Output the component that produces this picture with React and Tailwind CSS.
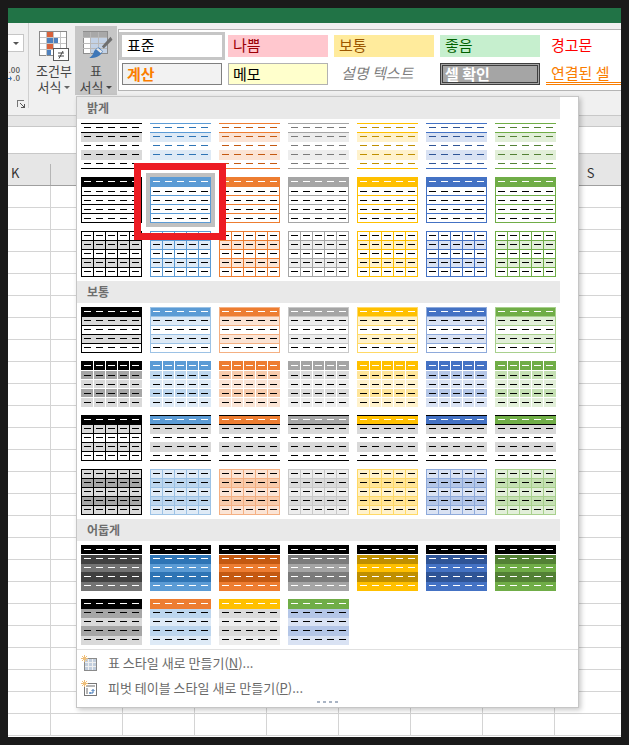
const FONT = "font-['Noto_Sans_CJK_KR','Noto_Sans',sans-serif]"

const THEMES = [
  { main: '#000000', dark: '#000000', soft: '#000000', mid: '#a6a6a6', pale: '#d9d9d9', deep: '#404040', lit: '#737373' },
  { main: '#5b9bd5', dark: '#2e74b5', soft: '#9cc2e5', mid: '#bdd6ee', pale: '#deeaf6', deep: '#2e74b5', lit: '#5b9bd5' },
  { main: '#ed7d31', dark: '#c45911', soft: '#f4b083', mid: '#f7cbac', pale: '#fbe4d5', deep: '#c45911', lit: '#ed7d31' },
  { main: '#a5a5a5', dark: '#7b7b7b', soft: '#c9c9c9', mid: '#dbdbdb', pale: '#ededed', deep: '#7b7b7b', lit: '#a5a5a5' },
  { main: '#ffc000', dark: '#bf8f00', soft: '#ffd966', mid: '#ffe599', pale: '#fff2cc', deep: '#bf8f00', lit: '#ffc000' },
  { main: '#4472c4', dark: '#2f5496', soft: '#8eaadb', mid: '#b4c6e7', pale: '#d9e2f3', deep: '#2f5496', lit: '#4472c4' },
  { main: '#70ad47', dark: '#538135', soft: '#a8d08d', mid: '#c5e0b3', pale: '#e2efd9', deep: '#538135', lit: '#70ad47' },
]

// last row of the dark group mixes header and band colours
const DARK_MIXED = [
  { main: '#000000', mid: '#a6a6a6', pale: '#d9d9d9' },
  { main: '#ed7d31', mid: '#bdd6ee', pale: '#deeaf6' },
  { main: '#ffc000', mid: '#dbdbdb', pale: '#ededed' },
  { main: '#70ad47', mid: '#b4c6e7', pale: '#d9e2f3' },
]

const COLUMNS = ['L', 'M', 'N', 'O', 'P', 'Q', 'R', 'S']
const ROWS = Array.from({ length: 25 }, (_, i) => i)

function thumbParts(kind, c) {
  const fills = []
  const lines = []
  let dashYs = [4, 13, 22, 31, 40]
  let dash = ['#000000', '#000000', '#000000', '#000000', '#000000']

  const fill = (y0, y1, color) => fills.push([0, y0, 61, y1 - y0, color])
  const hLine = (y, color) => lines.push([0, y, 61, 1, color])
  const vLine = (x, color) => lines.push([x, 0, 1, 46, color])
  const frame = color => {
    hLine(0, color)
    hLine(45, color)
    vLine(0, color)
    vLine(60, color)
  }
  const grid = color => {
    frame(color)
    ;[9, 18, 27, 36].forEach(y => hLine(y, color))
    ;[12, 24, 36, 48].forEach(x => vLine(x, color))
  }

  if (kind === 'lightBand') {
    fill(9, 19, c.pale)
    fill(27, 37, c.pale)
    hLine(0, c.main)
    hLine(9, c.main)
    hLine(45, c.main)
    dash = dash.map(() => c.dark)
  } else if (kind === 'lightLined') {
    fill(0, 10, c.main)
    frame(c.main)
    ;[18, 27, 36].forEach(y => hLine(y, c.main))
    dashYs = [4, 14, 23, 32, 41]
    dash[0] = '#ffffff'
  } else if (kind === 'lightGrid') {
    fill(9, 18, c.pale)
    fill(27, 36, c.pale)
    grid(c.main)
  } else if (kind === 'midLined') {
    fill(0, 9, c.main)
    fill(9, 18, c.pale)
    fill(27, 36, c.pale)
    frame(c.soft)
    ;[9, 18, 27, 36].forEach(y => hLine(y, c.soft))
    dash[0] = '#ffffff'
  } else if (kind === 'midBlock') {
    fill(0, 9, c.main)
    fill(10, 18, c.mid)
    fill(19, 27, c.pale)
    fill(28, 36, c.mid)
    fill(37, 46, c.pale)
    ;[12, 24, 36, 48].forEach(x => vLine(x, '#ffffff'))
    dashYs = [4, 14, 23, 32, 41]
    dash[0] = '#ffffff'
  } else if (kind === 'midRule') {
    if (c.main === '#000000') {
      fill(0, 9, '#000000')
      fill(9, 18, '#d9d9d9')
      fill(27, 36, '#d9d9d9')
      grid('#000000')
    } else {
      fill(1, 9, c.main)
      fill(10, 19, '#d9d9d9')
      fill(27, 37, '#d9d9d9')
      hLine(0, '#000000')
      hLine(9, '#000000')
      hLine(45, '#000000')
    }
    dash[0] = '#ffffff'
  } else if (kind === 'midGrid') {
    fill(0, 46, c.pale)
    fill(9, 18, c.mid)
    fill(27, 36, c.mid)
    grid(c.soft)
  } else if (kind === 'darkBand') {
    fill(0, 9, '#000000')
    fill(10, 19, c.deep)
    fill(19, 27, c.lit)
    fill(27, 37, c.deep)
    fill(37, 46, c.lit)
    dash = dash.map(() => '#ffffff')
  } else if (kind === 'darkMixed') {
    fill(0, 10, c.main)
    fill(10, 19, c.mid)
    fill(19, 27, c.pale)
    fill(27, 37, c.mid)
    fill(37, 46, c.pale)
    dash[0] = '#ffffff'
  }
  return { fills, lines, dashYs, dash }
}

function TableThumb({ kind, c }) {
  const { fills, lines, dashYs, dash } = thumbParts(kind, c)
  return (
    <svg width="61" height="46" viewBox="0 0 61 46" shapeRendering="crispEdges" className="block">
      {[...fills, ...lines].map(([x, y, w, h, color], i) => (
        <rect key={i} x={x} y={y} width={w} height={h} fill={color} />
      ))}
      {dashYs.map((y, row) =>
        [3, 15, 27, 39, 51].map(x => (
          <rect key={`${row}-${x}`} x={x} y={y} width="7" height="1" fill={dash[row]} />
        ))
      )}
    </svg>
  )
}

function ThumbRow({ kind, themes = THEMES, selected }) {
  return themes.map((c, i) => (
    <div key={i} className={selected === i ? 'ring-4 ring-[#c0c0c0]' : ''}>
      <TableThumb kind={kind} c={c} />
    </div>
  ))
}

function Section({ title, children }) {
  return (
    <div>
      <div className="flex h-[22px] w-[483px] items-center bg-[#e9e9e9] pl-[10px] text-[12px] font-bold text-[#6e6e6e]">
        {title}
      </div>
      <div className="grid w-[483px] grid-cols-[repeat(7,61px)] gap-x-2 gap-y-2 px-1 py-1">{children}</div>
    </div>
  )
}

function ConditionalIcon() {
  return (
    <svg width="30" height="31" viewBox="0 0 30 31" shapeRendering="crispEdges">
      <rect x="0.5" y="0.5" width="27" height="24" fill="#fff" stroke="#8a8a8a" />
      <rect x="8" y="1" width="6" height="5" fill="#d9623b" />
      <rect x="8" y="7" width="11" height="5" fill="#4f81bd" />
      <rect x="8" y="13" width="6" height="5" fill="#d9623b" />
      <rect x="8" y="19" width="4" height="5" fill="#4f81bd" />
      <path d="M7.5 1v24M14.5 1v24M21.5 1v24M1 6.5h26M1 12.5h26M1 18.5h26" stroke="#c4c4c4" fill="none" />
      <rect x="14.5" y="17.5" width="15" height="12" fill="#fff" stroke="#5a5a5a" />
      <path d="M19 22h6M19 25h6M24 20l-4 7.5" stroke="#444" fill="none" shapeRendering="auto" />
    </svg>
  )
}

function TableStyleIcon() {
  return (
    <svg width="31" height="30" viewBox="0 0 31 30" className="ml-[3px]">
      <g shapeRendering="crispEdges">
        <rect x="0.5" y="0.5" width="25" height="23" fill="#fff" stroke="#8a8a8a" />
        <rect x="1" y="1" width="24" height="5" fill="#a8a8a8" />
        <rect x="9" y="6" width="16" height="17" fill="#c3d2e6" />
        <path d="M8.5 1v23M16.5 1v23M1 6.5h24M1 12.5h24M1 18.5h24" stroke="#b8b8b8" fill="none" />
      </g>
      <path d="M29 6l-9 10 2 2 9-9z" fill="#6f6f6f" />
      <path d="M17 17l4 4c-2 5-7 7-14 7 3-2 4-4 5-7 1-2 3-4 5-4z" fill="#3f77b8" />
      <path d="M16 17.5l4.5 3.5-1.5 2-5-4z" fill="#e8e8e8" />
    </svg>
  )
}

function LauncherIcon() {
  return (
    <svg width="8" height="8" viewBox="0 0 8 8" shapeRendering="crispEdges">
      <path d="M.5 7V.5H7" stroke="#777" fill="none" />
      <path d="M3 3l4 4M7 4v3H4" stroke="#555" fill="none" />
    </svg>
  )
}

function NewTableIcon() {
  return (
    <svg width="16" height="16" viewBox="0 0 16 16">
      <rect x="3.5" y="3.5" width="12" height="12" fill="#c2cedd" stroke="#8a8a8a" shapeRendering="crispEdges" />
      <path d="M7.5 4v11M11.5 4v11M4 7.5h11M4 11.5h11" stroke="#f0f0f0" shapeRendering="crispEdges" />
      <path d="M3.5 0v7M0 3.5h7M1 1l5 5M6 1l-5 5" stroke="#efbf7a" strokeWidth="1" />
    </svg>
  )
}

function NewPivotIcon() {
  return (
    <svg width="16" height="16" viewBox="0 0 16 16">
      <rect x="3.5" y="3.5" width="12" height="12" fill="#fff" stroke="#777" shapeRendering="crispEdges" />
      <rect x="5" y="5" width="9" height="2" fill="#b5b5b5" />
      <rect x="5" y="8" width="2" height="6" fill="#b5b5b5" />
      <path d="M8.5 13h3.5V9.5M10.5 11l1.5-1.5 1.5 1.5M8.5 13l1-1M8.5 13l1 1" stroke="#3f77b8" fill="none" />
      <path d="M3.5 0v7M0 3.5h7M1 1l5 5M6 1l-5 5" stroke="#efbf7a" strokeWidth="1" />
    </svg>
  )
}

function StyleMenu() {
  return (
    <div className="absolute left-[76px] top-[96px] z-10 h-[612px] w-[503px] border border-[#c6c6c6] bg-white shadow-[2px_2px_5px_rgba(0,0,0,0.22)]">
      <Section title="밝게">
        <ThumbRow kind="lightBand" />
        <ThumbRow kind="lightLined" selected={1} />
        <ThumbRow kind="lightGrid" />
      </Section>
      <Section title="보통">
        <ThumbRow kind="midLined" />
        <ThumbRow kind="midBlock" />
        <ThumbRow kind="midRule" />
        <ThumbRow kind="midGrid" />
      </Section>
      <Section title="어둡게">
        <ThumbRow kind="darkBand" />
        <ThumbRow kind="darkMixed" themes={DARK_MIXED} />
      </Section>

      <div className="border-t border-[#e0e0e0] text-[13px] text-[#6a6a6a]">
        <div className="flex h-[25px] items-center gap-[11px] pl-1">
          <NewTableIcon />
          <span>표 스타일 새로 만들기(<span className="underline">N</span>)...</span>
        </div>
        <div className="flex h-[25px] items-center gap-[11px] pl-1">
          <NewPivotIcon />
          <span>피벗 테이블 스타일 새로 만들기(<span className="underline">P</span>)...</span>
        </div>
        <div className="ml-[240px] mt-[1px] flex gap-[3px]">
          <span className="h-[2px] w-[3px] bg-[#a9b4c4]" />
          <span className="h-[2px] w-[3px] bg-[#a9b4c4]" />
          <span className="h-[2px] w-[3px] bg-[#a9b4c4]" />
          <span className="h-[2px] w-[3px] bg-[#a9b4c4]" />
        </div>
      </div>

      {/* red callout drawn over the screenshot */}
      <div className="absolute left-[57px] top-[66px] h-[77px] w-[92px] border-[7px] border-[#ed1c24]" />
    </div>
  )
}

function Ribbon() {
  return (
    <div className="flex h-[93px] items-start overflow-hidden border-b border-[#c8c8c8] bg-[#f0f0f0]">
      <div className="flex h-[85px] w-[21px] shrink-0 flex-col items-start border-r border-[#d0d0d0]">
        <div className="mt-[11px] flex h-[23px] w-[16px] items-center justify-center border border-l-0 border-[#c6c6c6] bg-white">
          <span className="border-x-[3px] border-t-[3px] border-x-transparent border-t-[#555]" />
        </div>
        <div className="mt-[14px] w-[12px] text-[8px] font-medium leading-[8px] text-[#555]">
          <div className="text-right">.00</div>
          <div className="flex items-center justify-end gap-[1px]">
            <svg width="4" height="5" viewBox="0 0 4 5">
              <path d="M0 2h2V0l2 2.500-2 2.500V3H0z" fill="#3f77b8" />
            </svg>
            .0
          </div>
        </div>
        <div className="ml-[9px] mt-[18px]">
          <LauncherIcon />
        </div>
      </div>

      <div className="flex w-[46px] shrink-0 flex-col items-center pl-1 pt-[8px] text-[13px] leading-[16px] text-[#444]">
        <ConditionalIcon />
        <div className="mt-[1px]">조건부</div>
        <div className="flex items-center gap-[3px]">
          서식
          <span className="border-x-[3px] border-t-[3px] border-x-transparent border-t-[#666]" />
        </div>
      </div>

      <div className="mt-[3px] flex h-[69px] w-[42px] shrink-0 flex-col items-center bg-[#c6c6c6] pt-[5px] text-[13px] leading-[16px] text-[#444]">
        <TableStyleIcon />
        <div className="mt-[3px]">표</div>
        <div className="flex items-center gap-[3px]">
          서식
          <span className="border-x-[3px] border-t-[3px] border-x-transparent border-t-[#444]" />
        </div>
      </div>

      <div className="ml-[1px] mt-[6px] grid h-[62px] w-[503px] shrink-0 grid-cols-[repeat(4,100px)_75px] grid-rows-[22px_22px] gap-[6px] border border-r-0 border-[#b4b4b4] bg-white pl-[3px] pt-[5px] text-[15px] leading-[19px]">
        <div className="bg-white pl-[5px] text-black ring-[3px] ring-[#c6c6c6]">표준</div>
        <div className="bg-[#ffc7ce] pl-[5px] text-[#9c0006]">나쁨</div>
        <div className="bg-[#ffeb9c] pl-[5px] text-[#9c5700]">보통</div>
        <div className="bg-[#c6efce] pl-[5px] text-[#006100]">좋음</div>
        <div className="pl-[5px] text-[#ff0000]">경고문</div>
        <div className="border border-[#7f7f7f] bg-[#f2f2f2] pl-[4px] font-bold text-[#fa7d00]">계산</div>
        <div className="border border-[#b2b2b2] bg-[#ffffcc] pl-[4px] text-black">메모</div>
        <div className="pl-[7px] italic text-[#7f7f7f]">설명 텍스트</div>
        <div className="border-[3px] border-double border-[#3f3f3f] bg-[#a5a5a5] pl-[2px] font-bold leading-[15px] text-white">셀 확인</div>
        <div className="border-b-[3px] border-double border-[#fa7d00] pl-[5px] text-[#fa7d00]">연결된 셀</div>
      </div>
    </div>
  )
}

function Sheet() {
  return (
    <div className="flex-1 overflow-hidden bg-white text-[13px] text-[#333]">
      <div className="flex h-[32px] items-end border-b border-[#9f9f9f] bg-[#e6e6e6]">
        <div className="flex h-[21px] w-[43px] shrink-0 items-center border-r border-[#b5b5b5] pb-1 pl-[3px]">K</div>
        {COLUMNS.map(col => (
          <div key={col} className="flex h-[21px] w-[72px] shrink-0 items-center justify-center border-r border-[#b5b5b5] pb-1">
            {col}
          </div>
        ))}
      </div>
      {ROWS.map(row => (
        <div key={row} className="flex h-[22px] border-b border-[#d4d4d4]">
          <div className="w-[43px] shrink-0 border-r border-[#d4d4d4]" />
          {COLUMNS.map(col => (
            <div key={col} className="w-[72px] shrink-0 border-r border-[#d4d4d4]" />
          ))}
        </div>
      ))}
    </div>
  )
}

export default function App() {
  return (
    <div className={`relative h-[745px] w-[629px] overflow-hidden bg-[#1a1a1a] p-2 ${FONT}`}>
      <div className="flex h-full flex-col overflow-hidden">
        <div className="h-[15px] bg-[#217346]" />
        <Ribbon />
        <div className="h-[11px] border-b border-[#c8c8c8] bg-[#e6e6e6]" />
        <div className="h-[27px] border-b border-[#c8c8c8] bg-white" />
        <Sheet />
      </div>
      <StyleMenu />
    </div>
  )
}
